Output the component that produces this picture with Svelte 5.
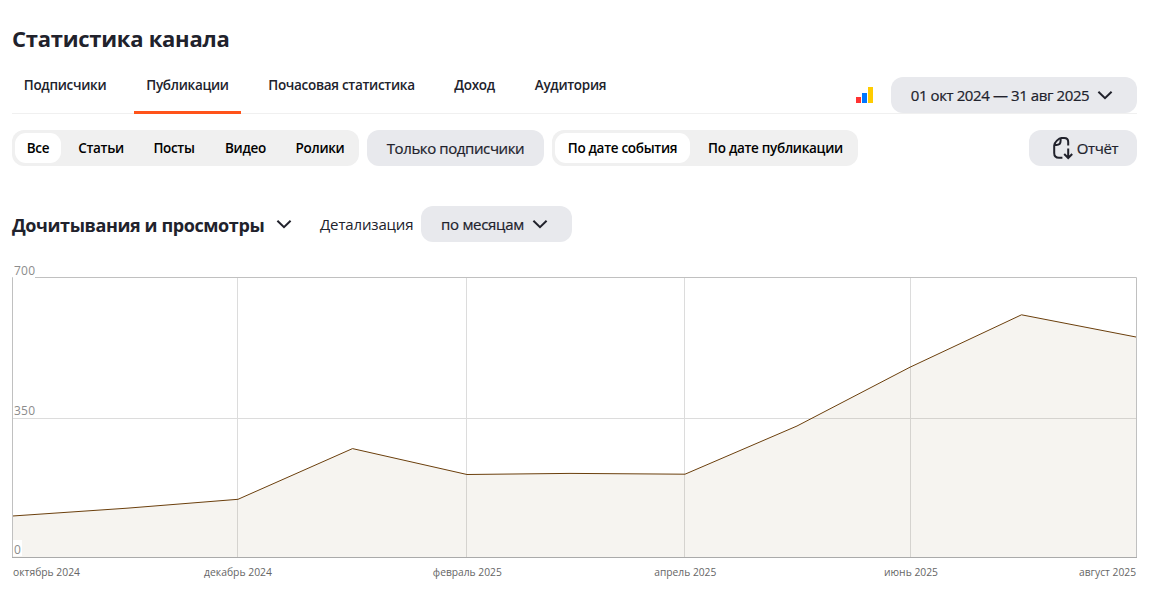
<script>
    let tabs = [
        { title: "Подписчики", width: 106 },
        { title: "Публикации", width: 107, active: true },
        { title: "Почасовая статистика", width: 169 },
        { title: "Доход", width: 65 },
        { title: "Аудитория", width: 95 }
    ]

    let types = [
        { title: "Все", width: 46, active: true },
        { title: "Статьи", width: 68 },
        { title: "Посты", width: 66 },
        { title: "Видео", width: 65 },
        { title: "Ролики", width: 72 }
    ]

    let dateModes = [
        { title: "По дате события", width: 135, active: true },
        { title: "По дате публикации", width: 159 }
    ]

    // chart points in svg units, y goes down from the 700 line
    let points = [
        [0.5, 239], [115, 231.2], [226, 222.3], [340.5, 171.6], [455, 197.5],
        [558, 196.4], [673, 197.2], [785, 149], [898, 90.2], [1009.5, 37.8], [1124, 60]
    ]
    let line = points.map(p => p.join(",")).join(" ")
    let area = line + " 1124,280 0.5,280"

    let gridX = [225.5, 454.5, 672.5, 898.5]

    let months = [
        { title: "октябрь 2024", x: 1, anchor: "start", length: 67 },
        { title: "декабрь 2024", x: 226, anchor: "middle", length: 68 },
        { title: "февраль 2025", x: 455.3, anchor: "middle", length: 69 },
        { title: "апрель 2025", x: 673.3, anchor: "middle", length: 62 },
        { title: "июнь 2025", x: 899, anchor: "middle", length: 54 },
        { title: "август 2025", x: 1124, anchor: "end", length: 57 }
    ]
</script>

{#snippet chevron()}
    <svg class="chevron" width="16" height="10" viewBox="0 0 16 10">
        <path d="M1.4 1.7 8 8.2l6.6-6.5" />
    </svg>
{/snippet}

{#snippet segments(items)}
    <div class="segments">
        {#each items as item}
            <button class="segment" class:active={item.active} style="width: {item.width}px">{item.title}</button>
        {/each}
    </div>
{/snippet}

<div class="page">
    <h1>Статистика канала</h1>

    <div class="top">
        <nav class="tabs">
            {#each tabs as tab}
                <button class="tab" class:active={tab.active} style="width: {tab.width}px">{tab.title}</button>
            {/each}
        </nav>
        <svg class="metrika" width="17" height="16" viewBox="0 0 17 16" shape-rendering="crispEdges">
            <rect x="0" y="10" width="5" height="6" fill="#ff3333" />
            <rect x="6" y="6" width="5" height="10" fill="#0077ff" />
            <rect x="12" y="0" width="5" height="16" fill="#ffcc00" />
        </svg>
        <button class="btn period"><span>01 окт 2024 — 31 авг 2025</span>{@render chevron()}</button>
    </div>

    <div class="filters">
        {@render segments(types)}
        <button class="btn subscribers">Только подписчики</button>
        {@render segments(dateModes)}
        <button class="btn report">
            <svg width="22" height="24" viewBox="0 0 22 24">
                <path d="M16.2 9.5V6c0-2.5-1.5-4-4-4H9.3C7 2 2.2 6.6 2.2 9.4V17c0 3 1.8 4.8 4.8 4.8h3.4" />
                <path d="M2.6 8.9h1.8c2.6 0 4.2-1.6 4.2-4.2V2.4" />
                <path d="M16.2 12.5v9M12.2 18l4 4 4-4" />
            </svg>
            <span>Отчёт</span>
        </button>
    </div>

    <div class="heading">
        <h2>Дочитывания и просмотры</h2>
        {@render chevron()}
        <span class="detail">Детализация</span>
        <button class="btn months"><span>по месяцам</span>{@render chevron()}</button>
    </div>

    <svg class="chart" width="1126" height="320" viewBox="0 -13 1126 320">
        <g class="grid">
            {#each gridX as x}
                <line x1={x} x2={x} y1="1" y2="280" />
            {/each}
            <line x1="1" x2="1124" y1="141.5" y2="141.5" />
        </g>
        <polygon class="area" points={area} />
        <polyline class="line" points={line} />
        <path class="frame" d="M0.5 280V0.5H1124.5V280" />
        <path class="axis" d="M0 280.5H1125" />
        <rect x="1" y="-12" width="22" height="15" fill="#fff" />
        <rect x="1" y="263" width="9" height="16" fill="#fff" />
        <g class="values">
            <text x="2" y="-2" textLength="21">700</text>
            <text x="2" y="138" textLength="21">350</text>
            <text x="2" y="277" textLength="7">0</text>
        </g>
        <g class="dates">
            {#each months as month}
                <text x={month.x} y="299" text-anchor={month.anchor} textLength={month.length} lengthAdjust="spacingAndGlyphs">{month.title}</text>
            {/each}
        </g>
    </svg>
</div>

<style>
    :global(body) {
        background: #fff;
        overflow: hidden;
    }

    .page {
        box-sizing: border-box;
        width: 1150px;
        height: 605px;
        padding: 20px 13px 0 12px;
        font-family: "Segoe UI", "Open Sans", "Noto Sans", sans-serif;
        color: #21222c;
    }

    h1 {
        margin: 0;
        height: 36px;
        font-size: 22px;
        line-height: 37px;
        font-weight: 700;
        letter-spacing: -0.25px;
        white-space: nowrap;
    }

    button {
        box-sizing: border-box;
        padding: 0;
        border: none;
        background: none;
        font-family: inherit;
        color: inherit;
        white-space: nowrap;
        cursor: pointer;
    }

    .top {
        display: flex;
        height: 58px;
        box-sizing: border-box;
        align-items: flex-end;
        border-bottom: 1px solid #f0f0f0;
    }

    .tabs {
        display: flex;
        gap: 16px;
        margin-bottom: -1px;
    }

    .tab {
        height: 44px;
        padding-bottom: 11px;
        border-bottom: 3px solid transparent;
        font-size: 13.5px;
        font-weight: 600;
        line-height: 20px;
        letter-spacing: -0.3px;
    }

    .tab.active {
        border-bottom-color: #ff531a;
    }

    .metrika {
        margin: 0 18px 10px auto;
    }

    .btn {
        display: flex;
        align-items: center;
        justify-content: center;
        height: 36px;
        border-radius: 12px;
        background: #e8e9ed;
        font-size: 15px;
        font-weight: 500;
        letter-spacing: -0.4px;
        -webkit-text-stroke: 0.2px currentColor;
    }

    .period {
        width: 246px;
        padding-right: 4px;
        gap: 8px;
    }

    .chevron {
        flex: none;
        fill: none;
        stroke: #21222c;
        stroke-width: 2;
    }

    .filters {
        display: flex;
        gap: 8px;
        margin-top: 16px;
    }

    .segments {
        display: flex;
        gap: 6px;
        padding: 3px;
        border-radius: 12px;
        background: #f0f0f0;
    }

    .segment {
        height: 30px;
        border-radius: 11px;
        font-size: 13.5px;
        font-weight: 600;
        letter-spacing: -0.3px;
        color: #000;
    }

    .segment.active {
        background: #fff;
    }

    .subscribers {
        width: 177px;
    }

    .report {
        width: 108px;
        margin-left: auto;
        padding-left: 4px;
        gap: 3px;
    }

    .report svg {
        fill: none;
        stroke: #21222c;
        stroke-width: 2;
    }

    .heading {
        display: flex;
        align-items: center;
        margin-top: 40px;
    }

    h2 {
        width: 253px;
        margin: 2px 11px 0 0;
        font-size: 18px;
        font-weight: 700;
        letter-spacing: -0.4px;
        white-space: nowrap;
    }

    .detail {
        width: 93px;
        margin: 0 8px 0 28px;
        font-size: 15px;
        letter-spacing: -0.15px;
    }

    .months {
        width: 151px;
        padding-right: 4px;
        gap: 8px;
        letter-spacing: -0.3px;
    }

    .chart {
        display: block;
        margin-top: 22px;
        overflow: visible;
    }

    .grid line {
        stroke: #dcdcdc;
    }

    .area {
        fill: #663d00;
        fill-opacity: 0.06;
    }

    .line {
        fill: none;
        stroke: #6b3f0c;
        stroke-width: 1;
    }

    .frame {
        fill: none;
        stroke: #c0c0c0;
    }

    .axis {
        stroke: #aaa;
    }

    .values {
        font-size: 12px;
        fill: #8c8c8c;
    }

    .dates {
        font-size: 11px;
        fill: #666;
    }
</style>
